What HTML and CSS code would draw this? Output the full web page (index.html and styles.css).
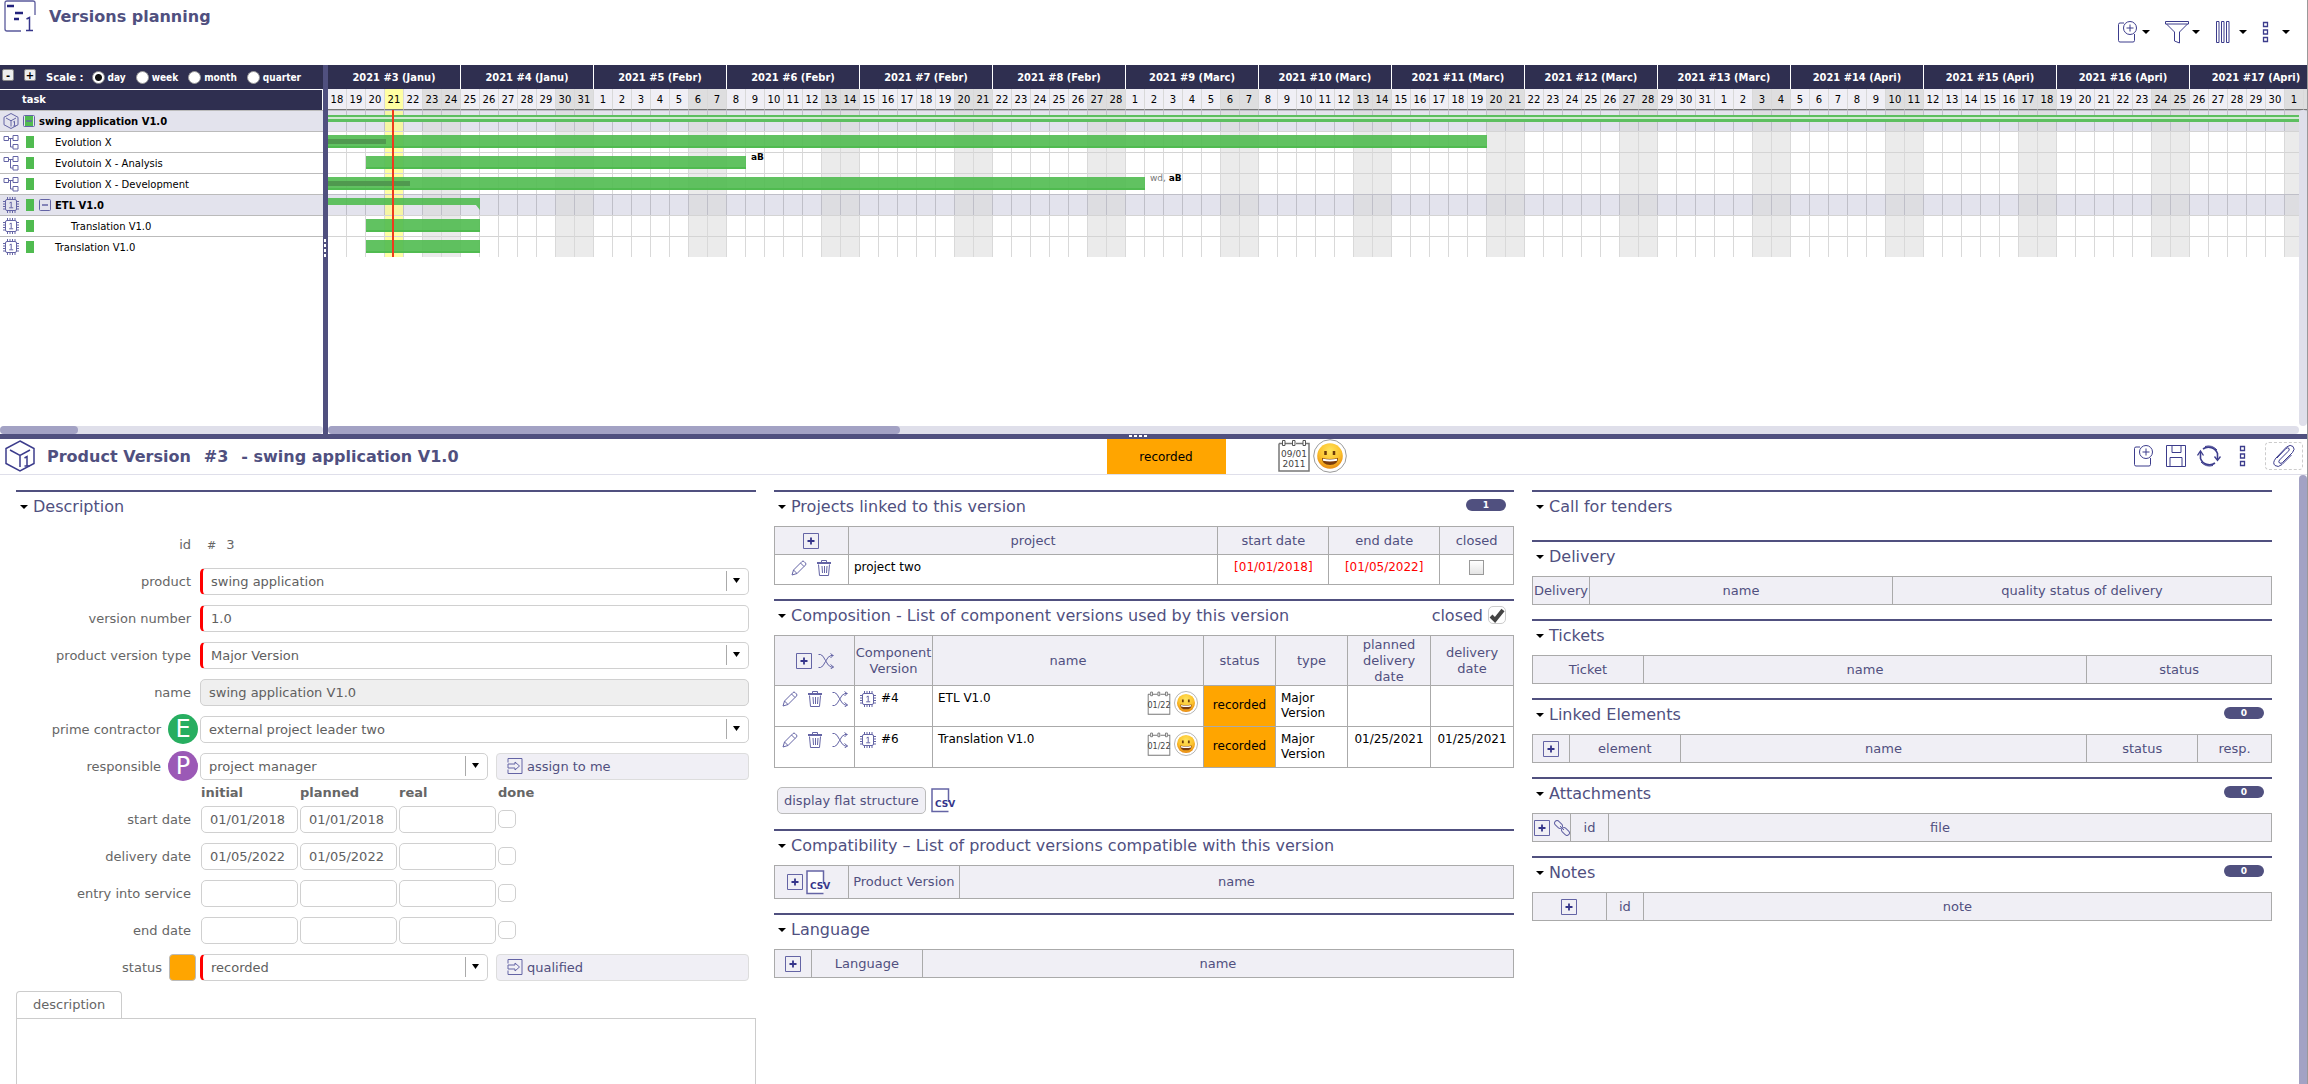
FILE: index.html
```html
<!DOCTYPE html>
<html lang="en">
  <head>
    <meta charset="UTF-8" />
    <title>Versions planning</title>
    <link rel="stylesheet" href="styles.css">
  </head>
  <body>
    <!-- icon set -->
    <svg class="sprite" aria-hidden="true">
      <defs>
        <radialGradient id="face" cx="50%" cy="30%" r="70%">
          <stop offset="0" stop-color="#ffe45c" />
          <stop offset="0.6" stop-color="#fcc22d" />
          <stop offset="1" stop-color="#e88a12" />
        </radialGradient>
        <symbol id="i-planning" viewBox="0 0 32 32">
          <path d="M31 15V3q0-2-2-2H3Q1 1 1 3v26q0 2 2 2h14" fill="none" stroke="#5a5a9c" stroke-width="1.300" />
          <path d="M3 6h7M11 13h8M10 19h5" stroke="#23237c" stroke-width="2.500" />
          <path d="M22.500 19l3-1.500V30M22 30.500h7" fill="none" stroke="#35358a" stroke-width="1.500" />
        </symbol>
        <symbol id="i-new" viewBox="0 0 22 24">
          <path d="M7 3H3Q1.500 3 1.500 4.500v16Q1.500 22 3 22h13q1.500 0 1.500-1.500V14" fill="none" />
          <circle cx="13" cy="8" r="6.500" fill="#fff" />
          <path d="M13 4.500v7M9.500 8h7" />
        </symbol>
        <symbol id="i-filter" viewBox="0 0 24 24">
          <path d="M.5 1.500h23v2.500H.5zM1.500 4l8 8v9l5 2V12l8-8" fill="none" />
        </symbol>
        <symbol id="i-columns" viewBox="0 0 16 24">
          <path d="M1.500 1.500h2.500v21H1.500zM6.500 1.500h2.500v21H6.500zM11.500 1.500h2.500v21h-2.500z" fill="none" />
        </symbol>
        <symbol id="i-dots" viewBox="0 0 8 24">
          <path d="M1.500 2.500h4v4h-4zM1.500 10h4v4h-4zM1.500 17.500h4v4h-4z" fill="none" stroke-width="1.300" />
        </symbol>
        <symbol id="i-save" viewBox="0 0 22 24">
          <path d="M1.500 1.500h19v21h-19zM7 1.500v7h9v-7M5 22.500V13.500h12v9" fill="none" />
        </symbol>
        <symbol id="i-refresh" viewBox="0 0 24 24">
          <path d="M6 5A9.500 9.500 0 0 1 20.500 9.500V15M18 19A9.500 9.500 0 0 1 3.500 14.500V8" fill="none" stroke-width="1.600" />
          <path d="M8 2.500Q15 .5 20 6M16 21.500Q9 23.500 4 18" fill="none" />
          <path d="M.5 11.500L3.500 7 6.500 11.500M17.500 12.500l3 4 3-4" fill="none" stroke-width="1.300" />
        </symbol>
        <symbol id="i-clip" viewBox="0 0 24 24">
          <path d="M16 7.500L7.500 16q-1.500 2 0 3t3-.5L20.500 8.500q3-3.500.5-6t-6.500.5L4 14q-4 5-1 7.500t7-1L19.500 11M16 7.500q2-1.500 1-3t-3 0L5 14" fill="none" />
        </symbol>
        <symbol id="i-box" viewBox="0 0 30 32">
          <path d="M15 1L29 8.500v15L15 31 1 23.500v-15zM5 10l10 5.500L25 10M15 15.500V27" fill="none" />
          <path d="M19.500 18l2.500-1.500v9M19.500 26h5" fill="none" />
        </symbol>
        <symbol id="i-tree" viewBox="0 0 16 16">
          <path d="M1 2.500h4.500v4H1zM10 1.500h5v5h-5zM10 10.500h5v4.500h-5zM5.500 4.500H10M7.500 4.500V13H10" fill="none" />
        </symbol>
        <symbol id="i-chip" viewBox="0 0 16 16">
          <rect x="2.500" y="2.500" width="11" height="11" rx="1.500" fill="none" />
          <path d="M4.500 0v2.500M7 0v2.500M9.500 0v2.500M12 0v2.500M4.500 13.500V16M7 13.500V16M9.500 13.500V16M12 13.500V16M0 4.500h2.500M0 7h2.500M0 9.500h2.500M0 12h2.500M13.500 4.500H16M13.500 7H16M13.500 9.500H16M13.500 12H16" />
          <path d="M6.500 6L8.200 5v5.500M6.200 10.800h4" fill="none" />
        </symbol>
        <symbol id="i-plus" viewBox="0 0 16 16">
          <path d="M.5.500h15v15H.5z" fill="none" />
          <path d="M8 4.500v7M4.500 8h7" stroke="#35358a" stroke-width="1.800" />
        </symbol>
        <symbol id="i-minus" viewBox="0 0 12 12">
          <rect x="0.500" y="0.500" width="11" height="11" rx="1" fill="none" />
          <path d="M3 6h6" stroke-width="1.500" />
        </symbol>
        <symbol id="i-pencil" viewBox="0 0 16 16">
          <path d="M1 15l1.500-5L11 1.500q1-1 2 0l1.500 1.500q1 1 0 2L6 13.500zM9.500 3l3.500 3.500M2.500 10L6 13.500" fill="none" />
        </symbol>
        <symbol id="i-trash" viewBox="0 0 16 16">
          <path d="M1 3h14" stroke-width="2" />
          <path d="M5.500 2.500V.5h5v2M2.500 4.500L3.500 15.500h9L13.500 4.500M6 6l.5 7M8.500 6v7M11 6l-.5 7" fill="none" />
        </symbol>
        <symbol id="i-shuffle" viewBox="0 0 16 16">
          <path d="M.5 1.500h2Q5 2 7.500 7.500T13 14h2.500M.5 14.500h2Q5 14 7.500 8.500T13 2.500h2.500M12.500.5l2.500 2-2.500 2.500M12.500 11.500l3 2.500-3 2" fill="none" />
        </symbol>
        <symbol id="i-link" viewBox="0 0 16 16">
          <rect x="0" y="2" width="9" height="5" rx="2.500" transform="rotate(45 4.500 4.500)" fill="none" />
          <rect x="7" y="9" width="9" height="5" rx="2.500" transform="rotate(45 11.500 11.500)" fill="none" />
          <path d="M6 6l4 4" />
        </symbol>
        <symbol id="i-goto" viewBox="0 0 16 16">
          <path d="M1 4.500V.5h14v15H1v-4M3 6h5V4l4.500 4L8 12v-2H1V6h2" fill="none" />
        </symbol>
        <symbol id="i-smile" viewBox="0 0 34 34">
          <circle cx="17" cy="17" r="16.300" fill="#fff" stroke="#999" />
          <circle cx="17" cy="17" r="12.800" fill="url(#face)" stroke="none" />
          <path d="M12.500 12v4M21 12v4" stroke="#6b3a08" stroke-width="2.500" />
          <path d="M9 19q8 2 16 0 0 7-8 7t-8-7z" fill="#7a3b0c" stroke="none" />
          <path d="M10 19.800q7 1.500 14 0v2q-7 1.500-14 0z" fill="#fff" stroke="none" />
        </symbol>
        <symbol id="i-calendar" viewBox="0 0 32 33">
          <path d="M1 4.500h3M7 4.500h7M18 4.500h7M28 4.500h3V32H1V4.500" fill="none" stroke="#777" stroke-width="1.500" />
          <path d="M4.500 1.500h2.500v5H4.500zM14.500 1.500h2.500v5h-2.500zM25 1.500h2.500v5H25z" fill="#fff" stroke="#555" />
        </symbol>
      </defs>
    </svg>

    <main class="planning">
      <header class="top">
        <svg class="top-icon"><use href="#i-planning" /></svg>
        <h1>Versions planning</h1>
        <nav class="tools">
          <button class="tool" aria-label="New"><svg width="22" height="24"><use href="#i-new" /></svg><i class="caret"></i></button>
          <button class="tool" aria-label="Filter"><svg width="24" height="24"><use href="#i-filter" /></svg><i class="caret"></i></button>
          <button class="tool" aria-label="Columns"><svg width="16" height="24"><use href="#i-columns" /></svg><i class="caret"></i></button>
          <button class="tool" aria-label="More"><svg width="8" height="24"><use href="#i-dots" /></svg><i class="caret"></i></button>
        </nav>
      </header>

      <div class="gantt">
        <section class="tasks">
          <form class="scale">
            <button type="button" class="fold" aria-label="Collapse all">-</button>
            <button type="button" class="fold" aria-label="Expand all">+</button>
            <b>Scale :</b>
            <label><input type="radio" name="scale" checked />day</label>
            <label><input type="radio" name="scale" />week</label>
            <label><input type="radio" name="scale" />month</label>
            <label><input type="radio" name="scale" />quarter</label>
          </form>
          <div class="task-head">task</div>
          <div class="task group root"><svg class="ico"><use href="#i-box" /></svg><button class="toggle on-green" aria-label="Collapse"><svg><use href="#i-minus" /></svg></button>swing application V1.0</div>
          <div class="task"><svg class="ico"><use href="#i-tree" /></svg><i class="state"></i><span>Evolution X</span></div>
          <div class="task"><svg class="ico"><use href="#i-tree" /></svg><i class="state"></i><span>Evolutoin X - Analysis</span></div>
          <div class="task"><svg class="ico"><use href="#i-tree" /></svg><i class="state"></i><span>Evolution X - Development</span></div>
          <div class="task group"><svg class="ico"><use href="#i-chip" /></svg><i class="state"></i><button class="toggle" aria-label="Collapse"><svg><use href="#i-minus" /></svg></button>ETL V1.0</div>
          <div class="task sub"><svg class="ico"><use href="#i-chip" /></svg><i class="state"></i><span>Translation V1.0</span></div>
          <div class="task"><svg class="ico"><use href="#i-chip" /></svg><i class="state"></i><span>Translation V1.0</span></div>
          <div class="scroll-x"><div class="thumb tasks-thumb"></div></div>
        </section>
        <div class="split-v"><i></i></div>
        <section class="chart">
          <div class="chart-view">
            <table class="days">
              <thead>
                <tr id="weeks"></tr>
                <tr id="days"></tr>
              </thead>
              <tbody id="cells"></tbody>
            </table>
            <div class="bars" id="bars"></div>
            <div class="scroll-y"></div>
          </div>
          <div class="scroll-x"><div class="thumb chart-thumb"></div></div>
        </section>
      </div>
    </main>

    <div class="split-h"><i></i></div>

    <header class="detail-head">
      <svg class="box-icon"><use href="#i-box" /></svg>
      <h2><span>Product Version</span><span>#3</span><span>- swing application V1.0</span></h2>
      <div class="status-tag">recorded</div>
      <div class="head-marks">
        <svg width="32" height="33"><use href="#i-calendar" /><text class="cal-text" x="16" y="18">09/01</text><text class="cal-text" x="16" y="28">2011</text></svg>
        <svg width="34" height="34"><use href="#i-smile" /></svg>
      </div>
      <nav class="head-tools">
        <button aria-label="New"><svg width="22" height="24"><use href="#i-new" /></svg></button>
        <button aria-label="Save"><svg width="22" height="24"><use href="#i-save" /></svg></button>
        <button aria-label="Refresh"><svg width="24" height="24"><use href="#i-refresh" /></svg></button>
        <button aria-label="More"><svg width="8" height="24"><use href="#i-dots" /></svg></button>
        <button class="drop" aria-label="Attach a file"><svg width="24" height="24"><use href="#i-clip" /></svg></button>
      </nav>
    </header>

    <div class="detail">
      <div class="columns">
        <div class="column">
          <section class="form">
            <h3><i class="caret"></i>Description</h3>
            <div class="field"><span class="name"><span>id</span></span><span class="value"><small>#</small> 3</span></div>
            <div class="field"><span class="name"><label for="product">product</label></span><div class="ctl"><select id="product" class="required"><option>swing application</option></select></div></div>
            <div class="field"><span class="name"><label for="number">version number</label></span><div class="ctl"><input type="text" id="number" class="required" value="1.0" /></div></div>
            <div class="field"><span class="name"><label for="type">product version type</label></span><div class="ctl"><select id="type" class="required"><option>Major Version</option></select></div></div>
            <div class="field"><span class="name"><label for="name">name</label></span><div class="ctl"><input type="text" id="name" value="swing application V1.0" readonly /></div></div>
            <div class="field"><span class="name"><label for="contractor">prime contractor</label><i class="avatar green">E</i></span><div class="ctl"><select id="contractor"><option>external project leader two</option></select></div></div>
            <div class="field"><span class="name"><label for="resp">responsible</label><i class="avatar purple">P</i></span><div class="ctl two"><select id="resp"><option>project manager</option></select><button class="action"><svg><use href="#i-goto" /></svg>assign to me</button></div></div>
            <div class="dates-head"><b>initial</b><b>planned</b><b>real</b><b>done</b></div>
            <div class="field"><span class="name"><span>start date</span></span><div class="dates"><input type="text" value="01/01/2018" aria-label="initial start date" /><input type="text" value="01/01/2018" aria-label="planned start date" /><input type="text" aria-label="real start date" /><input type="checkbox" aria-label="started" /></div></div>
            <div class="field"><span class="name"><span>delivery date</span></span><div class="dates"><input type="text" value="01/05/2022" aria-label="initial delivery date" /><input type="text" value="01/05/2022" aria-label="planned delivery date" /><input type="text" aria-label="real delivery date" /><input type="checkbox" aria-label="delivered" /></div></div>
            <div class="field"><span class="name"><span>entry into service</span></span><div class="dates"><input type="text" aria-label="initial entry into service" /><input type="text" aria-label="planned entry into service" /><input type="text" aria-label="real entry into service" /><input type="checkbox" aria-label="in service" /></div></div>
            <div class="field"><span class="name"><span>end date</span></span><div class="dates"><input type="text" aria-label="initial end date" /><input type="text" aria-label="planned end date" /><input type="text" aria-label="real end date" /><input type="checkbox" aria-label="ended" /></div></div>
            <div class="field"><span class="name"><label for="status">status</label><i class="swatch"></i></span><div class="ctl two"><select id="status" class="required"><option>recorded</option></select><button class="action"><svg><use href="#i-goto" /></svg>qualified</button></div></div>
            <button class="tab">description</button>
            <div class="tab-body"></div>
          </section>
        </div>

        <div class="column">
          <section>
            <h3><i class="caret"></i>Projects linked to this version<span class="badge">1</span></h3>
            <table class="list">
              <colgroup><col class="w10"><col class="w50"><col class="w15"><col class="w15"><col class="w10"></colgroup>
              <tr><th><svg><use href="#i-plus" /></svg></th><th>project</th><th>start date</th><th>end date</th><th>closed</th></tr>
              <tr class="short"><td><div class="icons"><svg><use href="#i-pencil" /></svg><svg><use href="#i-trash" /></svg></div></td><td>project two</td><td class="mid late">[01/01/2018]</td><td class="mid late">[01/05/2022]</td><td class="mid"><input type="checkbox" class="flat" aria-label="closed" /></td></tr>
            </table>
          </section>
          <section>
            <h3><i class="caret"></i>Composition - List of component versions used by this version<label class="closed">closed <input type="checkbox" checked /></label></h3>
            <table class="list">
              <colgroup><col class="c-tools"><col class="c-version"><col><col class="c-status"><col class="c-status"><col class="c-date"><col class="c-date"></colgroup>
              <tr><th><div class="icons tight"><svg><use href="#i-plus" /></svg><svg><use href="#i-shuffle" /></svg></div></th><th>Component Version</th><th>name</th><th>status</th><th>type</th><th>planned delivery date</th><th>delivery date</th></tr>
              <tr><td><div class="icons"><svg><use href="#i-pencil" /></svg><svg><use href="#i-trash" /></svg><svg><use href="#i-shuffle" /></svg></div></td><td><div class="ref"><svg><use href="#i-chip" /></svg>#4</div></td><td><div class="row-name">ETL V1.0<span class="marks"><svg viewBox="0 0 32 33"><use href="#i-calendar" /><text class="cal-text day" x="16" y="23">01/22</text></svg><svg><use href="#i-smile" /></svg></span></div></td><td class="rec">recorded</td><td>Major Version</td><td class="mid"></td><td class="mid"></td></tr>
              <tr><td><div class="icons"><svg><use href="#i-pencil" /></svg><svg><use href="#i-trash" /></svg><svg><use href="#i-shuffle" /></svg></div></td><td><div class="ref"><svg><use href="#i-chip" /></svg>#6</div></td><td><div class="row-name">Translation V1.0<span class="marks"><svg viewBox="0 0 32 33"><use href="#i-calendar" /><text class="cal-text day" x="16" y="23">01/22</text></svg><svg><use href="#i-smile" /></svg></span></div></td><td class="rec">recorded</td><td>Major Version</td><td class="mid">01/25/2021</td><td class="mid">01/25/2021</td></tr>
            </table>
            <div class="under">
              <button class="flat-btn">display flat structure</button>
              <svg class="csv" viewBox="0 0 23 25"><path d="M17.500 14V1H1v22.500h16.500" /><text x="4" y="19">CSV</text></svg>
            </div>
          </section>
          <section>
            <h3><i class="caret"></i>Compatibility – List of product versions compatible with this version</h3>
            <table class="list compat">
              <colgroup><col class="w10"><col class="w15"><col></colgroup>
              <tr><th><div class="icons csv-pair"><svg><use href="#i-plus" /></svg><svg class="csv" viewBox="0 0 23 25"><path d="M17.500 14V1H1v22.500h16.500" /><text x="4" y="19">CSV</text></svg></div></th><th>Product Version</th><th>name</th></tr>
            </table>
          </section>
          <section>
            <h3><i class="caret"></i>Language</h3>
            <table class="list">
              <colgroup><col class="w5"><col class="w15"><col></colgroup>
              <tr><th><svg><use href="#i-plus" /></svg></th><th>Language</th><th>name</th></tr>
            </table>
          </section>
        </div>

        <div class="column">
          <section><h3><i class="caret"></i>Call for tenders</h3></section>
          <section>
            <h3><i class="caret"></i>Delivery</h3>
            <table class="list">
              <colgroup><col class="c-delivery"><col class="w41"><col></colgroup>
              <tr><th>Delivery</th><th>name</th><th>quality status of delivery</th></tr>
            </table>
          </section>
          <section>
            <h3><i class="caret"></i>Tickets</h3>
            <table class="list">
              <colgroup><col class="w15"><col><col class="w25"></colgroup>
              <tr><th>Ticket</th><th>name</th><th>status</th></tr>
            </table>
          </section>
          <section>
            <h3><i class="caret"></i>Linked Elements<span class="badge">0</span></h3>
            <table class="list">
              <colgroup><col class="w5"><col class="w15"><col><col class="w15"><col class="w10"></colgroup>
              <tr><th><svg><use href="#i-plus" /></svg></th><th>element</th><th>name</th><th>status</th><th>resp.</th></tr>
            </table>
          </section>
          <section>
            <h3><i class="caret"></i>Attachments<span class="badge">0</span></h3>
            <table class="list">
              <colgroup><col class="c-files"><col class="c-files"><col></colgroup>
              <tr><th><div class="icons pair"><svg><use href="#i-plus" /></svg><svg><use href="#i-link" /></svg></div></th><th>id</th><th>file</th></tr>
            </table>
          </section>
          <section>
            <h3><i class="caret"></i>Notes<span class="badge">0</span></h3>
            <table class="list">
              <colgroup><col class="w10"><col class="w5"><col></colgroup>
              <tr><th><svg><use href="#i-plus" /></svg></th><th>id</th><th>note</th></tr>
            </table>
          </section>
        </div>
      </div>
      <div class="detail-scroll"></div>
    </div>

    <script>
      const DAY = 19, ROW = 21;
      const WEEKS = 15;
      const start = new Date(2021, 0, 18);
      const today = 3;

      // one entry per line of the task list, days counted from the first one shown
      const rows = [
        { kind: 'product', from: 0, to: 105 },
        { from: 0, to: 61, done: 58 },
        { from: 2, to: 22, who: '<b>aB</b>' },
        { from: 0, to: 43, done: 82, who: 'wd, <b>aB</b>' },
        { kind: 'group', from: 0, to: 8 },
        { from: 2, to: 8 },
        { from: 2, to: 8 }
      ];

      const dates = [];
      for (let i = 0; i < WEEKS * 7; i++) {
        dates.push(new Date(start.getFullYear(), start.getMonth(), start.getDate() + i));
      }
      const cls = i => i === today ? 'today' : (i % 7 > 4 ? 'off' : '');
      const num = (d, i) => i < dates.length - 1 ? d.getDate() : '';

      let weeks = '';
      for (let w = 0; w < WEEKS; w++) {
        const month = dates[w * 7].toLocaleString('en', { month: 'long' }).slice(0, 4);
        weeks += `<th colspan="7">2021 #${w + 3} (${month})</th>`;
      }
      document.getElementById('weeks').innerHTML = weeks;
      document.getElementById('days').innerHTML = dates.map((d, i) => `<th class="${cls(i)}">${num(d, i)}</th>`).join('');
      document.getElementById('cells').innerHTML = rows.map(r =>
        `<tr class="${r.kind ? 'group' : ''}">` + dates.map((d, i) => `<td class="${cls(i)}"></td>`).join('') + '</tr>').join('');

      document.getElementById('bars').innerHTML = rows.map(r => {
        const done = r.done ? `<i style="width:${r.done}px"></i>` : '';
        const who = r.who ? `<span>${r.who}</span>` : '';
        return `<div class="line"><div class="bar ${r.kind || ''}" style="margin-left:${r.from * DAY}px;width:${(r.to - r.from) * DAY}px">${done}</div>${who}</div>`;
      }).join('') + `<div class="now" style="left:${today * DAY + 7}px;height:${rows.length * ROW}px"></div>`;
    </script>
  </body>
</html>
```
FILE: styles.css
```css
:root {
  --main: #50507f;
  --dark: #2f2f50;
  --pale: #f0eff5;
  --track: #dfdfea;
  --thumb: #a3a2c4;
  --green: #50bb50;
  --line: #aaa;
  font-family: "DejaVu Sans", Verdana, sans-serif;
  font-size: 13px;
}
* {
  box-sizing: border-box;
}
body {
  margin: 0;
  height: 100vh;
  display: flex;
  flex-direction: column;
  overflow: hidden;
  background: #fff;
  border-right: 1px solid #999;
}
h1, h2, h3 {
  margin: 0;
  color: var(--main);
}
button, input, select {
  font: inherit;
  margin: 0;
}
button {
  padding: 0;
  border: 0;
  background: none;
}
i {
  font-style: normal;
}
svg {
  stroke: #6464a5;
  display: block;
  flex: none;
}
.sprite {
  position: absolute;
  width: 0;
  height: 0;
}
.caret {
  width: 0;
  height: 0;
  border: 4px solid transparent;
  border-top: 4px solid #000;
  border-bottom: 0;
}

/* planning */
.planning {
  height: 40vh;
  flex: none;
  display: flex;
  flex-direction: column;
}
.top {
  height: 65px;
  flex: none;
  display: flex;
  align-items: flex-start;
  padding-left: 4px;
}
.top-icon {
  width: 32px;
  height: 32px;
}
.top h1 {
  font-size: 16px;
  line-height: 34px;
  margin-left: 13px;
}
.tools {
  margin: 20px 17px 0 auto;
  display: flex;
  gap: 15px;
}
.tool {
  display: flex;
  align-items: center;
  gap: 3px;
}
.tool:nth-child(n+3) {
  gap: 8px;
}
.tool:nth-child(4) {
  gap: 12px;
}
.tools svg, .head-tools svg {
  stroke: #3c3c8c;
}
.gantt {
  flex: 1;
  min-height: 0;
  display: flex;
}
.tasks {
  width: 14%;
  flex: none;
  display: flex;
  flex-direction: column;
}
.scale {
  height: 25px;
  display: flex;
  align-items: center;
  padding-left: 2px;
  background: var(--dark);
  border-bottom: 1px solid #fff;
  color: #fff;
  font-size: 10px;
  font-weight: bold;
}
.fold {
  width: 12px;
  height: 12px;
  margin: 0 10px 4px 0;
  background: #eee;
  border: 1px solid #888;
  border-radius: 2px;
  line-height: 9px;
  font-size: 10px;
  font-weight: bold;
  color: #000;
}
.scale b {
  margin-right: 8px;
}
.scale label {
  display: flex;
  align-items: center;
  gap: 3px;
  margin-right: 10px;
  font-family: "DejaVu Sans Condensed", "DejaVu Sans", sans-serif;
}
.scale input {
  appearance: none;
  width: 13px;
  height: 13px;
  border-radius: 50%;
  background: #fff;
  border: 1px solid #999;
}
.scale input:checked {
  background: radial-gradient(circle, #111 3px, #fff 4px);
}
.task-head {
  height: 20px;
  line-height: 20px;
  padding-left: 22px;
  background: var(--dark);
  border-right: 1px solid #fff;
  color: #fff;
  font-family: "DejaVu Sans Condensed", "DejaVu Sans", sans-serif;
  font-size: 11px;
  font-weight: bold;
}
.task {
  height: 21px;
  display: flex;
  align-items: center;
  border-top: 1px solid #bbb;
  padding-left: 3px;
  font-size: 10px;
}
.task.group {
  background: #e3e3ed;
  font-weight: bold;
}
.task .ico {
  width: 16px;
  height: 16px;
  margin-right: 7px;
}
.root .ico {
  stroke-width: 2;
}
.root .ico, .root .toggle {
  margin-right: 4px;
}
.state {
  width: 8px;
  height: 12px;
  margin-right: 5px;
  background: var(--green);
}
.task span {
  padding-left: 16px;
}
.task.sub span {
  padding-left: 32px;
}
.toggle {
  margin-right: 4px;
}
.toggle svg {
  width: 12px;
  height: 12px;
}
.on-green {
  background: linear-gradient(90deg, transparent 2px, var(--green) 2px, var(--green) 10px, transparent 10px);
}
.scroll-x {
  height: 8px;
  flex: none;
  margin-top: auto;
  background: var(--track);
  border-radius: 4px;
}
.thumb {
  height: 100%;
  background: var(--thumb);
  border-radius: 4px;
}
.tasks-thumb {
  width: 24%;
}
.chart-thumb {
  width: 29%;
}
.split-v {
  width: 5px;
  flex: none;
  background: var(--main);
  display: flex;
  align-items: center;
  justify-content: center;
}
.split-v i {
  width: 2px;
  height: 20px;
  background: repeating-linear-gradient(#fff 0 3px, transparent 3px 5px);
}
.chart {
  flex: 1;
  min-width: 0;
  display: flex;
  flex-direction: column;
}
.chart .scroll-x {
  margin-right: 8px;
}
.chart-view {
  flex: 1;
  overflow: hidden;
  position: relative;
}
.days {
  width: 1995px;
  table-layout: fixed;
  border-collapse: separate;
  border-spacing: 0;
}
.days th, .days td {
  padding: 0;
  border-right: 1px solid #d9d9d9;
}
#weeks th {
  height: 24px;
  background: var(--dark);
  border-color: #fff;
  color: #fff;
  font-family: "DejaVu Sans Condensed", "DejaVu Sans", sans-serif;
  font-size: 11px;
}
#days th {
  height: 21px;
  background: var(--pale);
  border-bottom: 1px solid #777;
  font-size: 10px;
  font-weight: normal;
}
#days .off {
  background: #dededf;
}
#days .today {
  background: #ffffa3;
}
.days td {
  height: 21px;
  border-top: 1px solid #d4d4d4;
}
.days .off {
  background: #ebebeb;
}
.days .today {
  background: #ffffa3;
}
.group td {
  background: #e3e3ed;
  border-color: #bfbfc8;
}
.days .group .off {
  background: #dddde1;
}
.days .group .today {
  background: #f5f5a3;
}
/* bars lie over the day grid */
.bars {
  position: absolute;
  top: 45px;
  left: 0;
}
.line {
  height: 21px;
  padding-top: 4px;
  display: flex;
  gap: 5px;
  font-size: 9px;
  line-height: 10px;
  white-space: nowrap;
  color: #777;
}
.line b {
  color: #000;
}
.bar {
  height: 13px;
  flex: none;
  background: rgba(80, 187, 80, 0.9);
  border-bottom: 2px solid var(--green);
}
.bar i {
  display: block;
  height: 5px;
  margin-top: 4px;
  background: #50994f;
}
.bar.product {
  height: 7px;
  margin-top: 1px;
  border: 0;
  background: linear-gradient(#5dbf60 2px, #d0ead2 2px, #d0ead2 4px, #5dbf60 4px);
}
.bar.group {
  height: 12px;
  border: 0;
  clip-path: polygon(0 0, 100% 0, 100% 100%, calc(100% - 4px) 7px, 0 7px);
}
.line span {
  margin-top: -4px;
}
.now {
  position: absolute;
  top: 0;
  width: 2px;
  background: #f03a1c;
}
.scroll-y {
  position: absolute;
  top: 45px;
  right: 0;
  bottom: 0;
  width: 8px;
  background: var(--track);
  border-radius: 4px;
}
.split-h {
  height: 5px;
  flex: none;
  background: var(--main);
  display: flex;
  justify-content: center;
}
.split-h i {
  width: 20px;
  height: 2px;
  margin-top: 1px;
  margin-right: 30px;
  background: repeating-linear-gradient(90deg, #fff 0 3px, transparent 3px 5px);
}

/* detail header */
.detail-head {
  height: 36px;
  flex: none;
  display: grid;
  grid-template-columns: 30px 1fr 119px 1fr;
  align-items: center;
  padding: 0 10px 0 5px;
  border-bottom: 1px solid var(--track);
}
.box-icon {
  width: 30px;
  height: 32px;
  stroke: #3c3c8c;
  stroke-width: 1.5;
}
.detail-head h2 {
  display: flex;
  gap: 13px;
  padding: 1px 0 0 12px;
  font-size: 16px;
}
.status-tag {
  height: 35px;
  line-height: 36px;
  background: orange;
  text-align: center;
  font-size: 12px;
}
.head-marks {
  grid-area: 1 / 4;
  display: flex;
  gap: 3px;
  margin-left: 52px;
}
.cal-text {
  font-size: 9px;
  fill: #444;
  stroke: none;
  text-anchor: middle;
}
.cal-text.day {
  font-size: 11px;
}
.head-tools {
  grid-area: 1 / 4;
  justify-self: end;
  display: flex;
  align-items: center;
  gap: 10px;
  margin-right: -6px;
}
.head-tools .drop {
  width: 38px;
  height: 28px;
  margin-left: 8px;
  display: grid;
  place-items: center;
  border: 1px dashed #ccc;
  border-radius: 4px;
}
.head-tools button:nth-child(4) {
  margin-left: 8px;
}

/* detail body */
.detail {
  flex: 1;
  min-height: 0;
  display: flex;
}
.columns {
  flex: 1;
  min-width: 0;
  display: grid;
  grid-template-columns: repeat(3, minmax(0, 1fr));
  gap: 18px;
  padding: 15px 27px 0 16px;
  overflow: hidden;
}
.detail-scroll {
  width: 8px;
  background: var(--thumb);
  border-radius: 4px 4px 0 0;
}
section {
  min-width: 0;
}
.column section {
  margin-bottom: 14px;
}
h3 {
  height: 36px;
  display: flex;
  align-items: center;
  border-top: 2px solid var(--main);
  padding: 0 8px 4px 4px;
  font-size: 16px;
  font-weight: normal;
}
h3 .caret {
  margin-right: 5px;
}
.badge {
  width: 40px;
  height: 12px;
  margin: 0 0 4px auto;
  background: var(--main);
  border-radius: 6px;
  color: #fff;
  font-size: 9px;
  font-weight: bold;
  line-height: 12px;
  text-align: center;
}
.closed {
  display: flex;
  gap: 5px;
  margin-left: auto;
}

/* form */
.field {
  height: 37px;
  display: flex;
  align-items: center;
  gap: 2px;
  color: #666;
}
.name {
  width: 182px;
  flex: none;
  display: flex;
  align-items: center;
  justify-content: flex-end;
}
.name > span, .name > label {
  margin-right: 7px;
}
.value {
  padding-left: 7px;
}
.value small {
  font-size: 11px;
  margin-right: 6px;
}
.ctl {
  flex: 1;
  display: flex;
  gap: 8px;
  padding-right: 7px;
}
.form select, .form input {
  height: 27px;
  flex: 1;
  min-width: 0;
  padding: 0 8px;
  border: 1px solid #d0d0d0;
  border-radius: 5px;
  background: #fff;
  color: #606060;
}
.form select {
  appearance: none;
  background: #fff url("data:image/svg+xml,%3Csvg xmlns='http://www.w3.org/2000/svg' width='22' height='20'%3E%3Cpath d='M.5 0v20' stroke='%23aaa'/%3E%3Cpath d='M7 7h7l-3.500 5z'/%3E%3C/svg%3E") no-repeat right center;
}
.form .required {
  border-left: 3px solid red;
}
.form input[readonly] {
  background: #efefef;
}
.two .action {
  width: 253px;
  height: 27px;
  display: flex;
  align-items: center;
  gap: 4px;
  padding-left: 10px;
  background: var(--pale);
  border: 1px solid #ddd;
  border-radius: 4px;
  color: var(--main);
}
.action svg {
  width: 16px;
  height: 16px;
}
.avatar {
  width: 30px;
  height: 30px;
  border-radius: 50%;
  color: #fff;
  font-size: 24px;
  line-height: 30px;
  text-align: center;
}
.green {
  background: #27ae60;
}
.purple {
  background: #9b59b6;
}
.swatch {
  width: 27px;
  height: 27px;
  margin-right: 2px;
  background: orange;
  border: 1px solid #bbb;
  border-radius: 4px;
}
.dates-head, .dates {
  display: grid;
  grid-template-columns: 97px 97px 97px 18px;
  gap: 2px;
  align-items: center;
  padding-left: 1px;
}
.dates-head {
  height: 16px;
  padding-left: 185px;
  color: #666;
}
.form .dates input[type="checkbox"] {
  appearance: none;
  width: 18px;
  height: 18px;
  padding: 0;
}
.tab {
  display: block;
  height: 27px;
  margin-top: 5px;
  padding: 0 16px;
  border: 1px solid #ccc;
  border-bottom: 0;
  border-radius: 4px 4px 0 0;
  color: #666;
}
.tab-body {
  height: 120px;
  border: 1px solid #ccc;
}

/* lists */
.list {
  width: 100%;
  table-layout: fixed;
  border-collapse: collapse;
  font-size: 12px;
  line-height: 15px;
}
.list th, .list td {
  border: 1px solid var(--line);
}
.list th {
  height: 28px;
  padding: 1px 0 0;
  background: var(--pale);
  color: var(--main);
  font-size: 13px;
  font-weight: normal;
  line-height: 16px;
}
.list td {
  height: 41px;
  padding: 5px;
  vertical-align: top;
}
.list .short td {
  height: 29px;
}
.list svg {
  width: 16px;
  height: 16px;
  margin: 0 auto;
}
.compat th {
  height: 33px;
}
.icons {
  display: flex;
  justify-content: center;
  gap: 9px;
}
.tight {
  gap: 6px;
}
.pair {
  gap: 4px;
}
.csv-pair {
  align-items: center;
  gap: 3px;
  padding-right: 6px;
}
.list .icons svg, .list .ref svg, .list .marks svg {
  margin: 0;
}
.ref, .marks {
  display: flex;
  gap: 5px;
}
.marks {
  gap: 3px;
  height: 24px;
}
.list .marks svg {
  width: 24px;
  height: 24px;
}
.row-name {
  height: 30px;
  display: flex;
  justify-content: space-between;
}
.mid {
  text-align: center;
}
.list .mid {
  padding: 5px 0;
}
.late {
  color: red;
}
.list .rec {
  background: orange;
  text-align: center;
  vertical-align: middle;
  padding: 0;
}
.flat, .closed input {
  appearance: none;
  width: 15px;
  height: 15px;
  border: 1px solid #999;
  background: linear-gradient(#fff, #e4e4e4);
}
.closed input {
  width: 18px;
  height: 18px;
  border-color: #ccc;
  border-radius: 5px;
  background: #fff url("data:image/svg+xml,%3Csvg xmlns='http://www.w3.org/2000/svg' width='16' height='16'%3E%3Cpath d='M2 9l4 4 8-10' fill='none' stroke='%23444' stroke-width='4'/%3E%3C/svg%3E") center;
}
.w5 { width: 5%; }
.w10 { width: 10%; }
.w15 { width: 15%; }
.w25 { width: 25%; }
.w41 { width: 41%; }
.w50 { width: 50%; }
.c-tools { width: 80px; }
.c-version { width: 78px; }
.c-status { width: 72px; }
.c-date { width: 83px; }
.c-delivery { width: 57px; }
.c-files { width: 38px; }
.under {
  display: flex;
  align-items: center;
  gap: 5px;
  margin: 19px 0 15px 3px;
}
.flat-btn {
  height: 27px;
  padding: 0 6px;
  background: var(--pale);
  border: 1px solid #bbb;
  border-radius: 5px;
  color: var(--main);
}
.csv, .list .icons .csv {
  width: 23px;
  height: 25px;
  overflow: visible;
}
.csv path {
  fill: #fff;
  stroke-width: 1.5;
}
.csv text {
  font-size: 9px;
  font-weight: bold;
  fill: #35358a;
  stroke: none;
}
```
